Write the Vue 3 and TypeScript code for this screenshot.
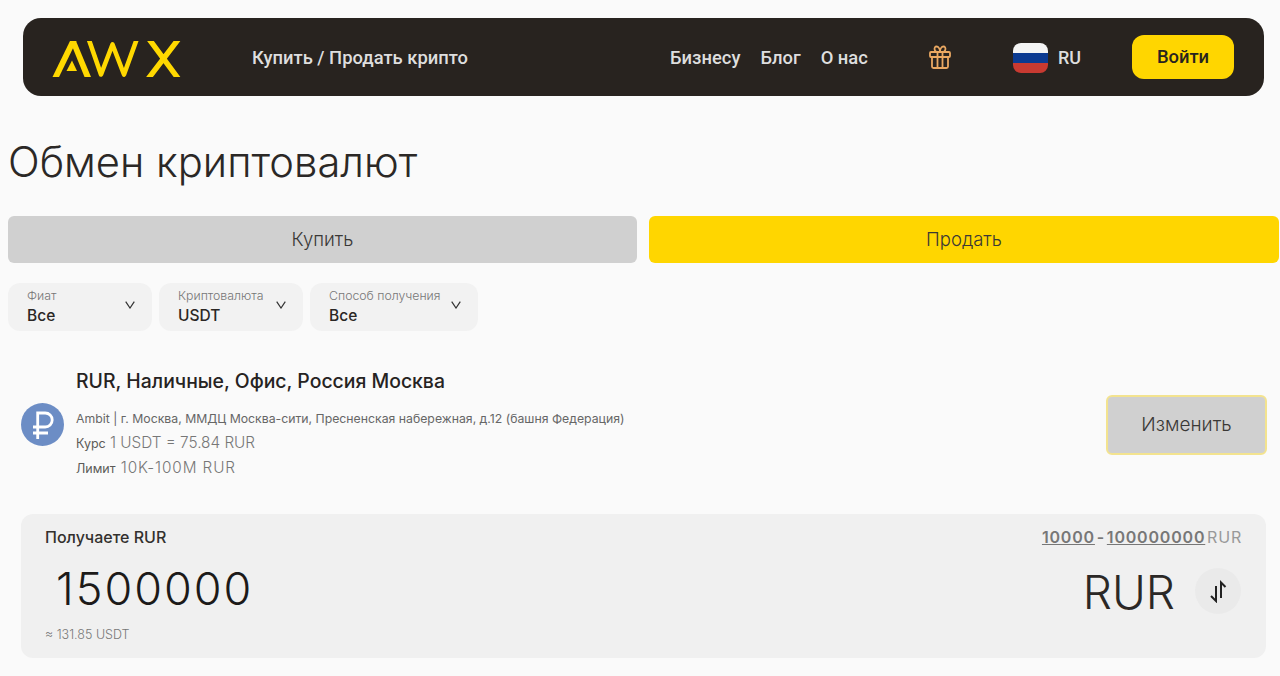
<template>
  <div class="page">
    <header class="topbar">
      <svg class="logo" viewBox="52 40.500 130 36" width="130" height="36" fill="#ffd800">
        <path d="M52.500 76.500 70 40.500h6.500L59 76.500Z" />
        <path d="M70 40.500h6L91 76.500h-6.500Z" />
        <path d="M66.500 70.500 72 60l5 10.500Z" />
        <path d="M88.500 38 101 74 112.500 44 124 74 137 38" fill="none" stroke="#ffd800" stroke-width="4.600" stroke-linejoin="round" />
        <path d="M149 38.500 178.500 78.500M178.500 38.500 148 78.500" fill="none" stroke="#ffd800" stroke-width="5.400" />
      </svg>
      <a class="nav-link trade">Купить / Продать крипто</a>
      <nav class="nav">
        <a v-for="link in links" :key="link" class="nav-link">{{ link }}</a>
      </nav>
      <svg class="gift" viewBox="0 0 22 24" width="22" height="24" fill="none" stroke="#eaa862" stroke-width="1.800" stroke-linejoin="round">
        <rect x="1" y="7" width="20" height="5" rx="1" />
        <path d="M3 12v9.500a1.500 1.500 0 0 0 1.500 1.500h13a1.500 1.500 0 0 0 1.500-1.500V12" />
        <path d="M8.500 7v16M13.500 7v16" />
        <path d="M8.500 7C5 7 4.500 1.500 7.500 1.500 9.500 1.500 11 4 11 7c0-3 1.500-5.500 3.500-5.500 3 0 2.500 5.500-1 5.500" />
      </svg>
      <div class="flag"><span class="white"></span><span class="blue"></span><span class="red"></span></div>
      <span class="lang">RU</span>
      <button class="login">Войти</button>
    </header>

    <h1 class="title">Обмен криптовалют</h1>

    <div class="tabs">
      <button class="tab">Купить</button>
      <button class="tab active">Продать</button>
    </div>

    <div class="filters">
      <div v-for="f in filters" :key="f.label" class="filter" :style="{ width: f.width + 'px' }">
        <div>
          <div class="filter-label">{{ f.label }}</div>
          <div class="filter-value">{{ f.value }}</div>
        </div>
        <svg class="chevron" viewBox="0 0 10 8" width="10" height="8" fill="none" stroke="#333" stroke-width="1.200">
          <path d="M.7.7 5 7 9.300.7" />
        </svg>
      </div>
    </div>

    <section class="offer">
      <svg class="rub" viewBox="0 0 43 43" width="43" height="43">
        <circle cx="21.500" cy="21.500" r="21.500" fill="#6c8dc5" />
        <path d="M16.700 36V10h7.500a7 7 0 0 1 0 14H12M12 30h15" fill="none" stroke="#fff" stroke-width="2.800" />
      </svg>
      <div class="offer-info">
        <div class="offer-title">RUR, Наличные, Офис, Россия Москва</div>
        <div class="offer-address">Ambit | г. Москва, ММДЦ Москва-сити, Пресненская набережная, д.12 (башня Федерация)</div>
        <div class="offer-line"><span class="key">Курс</span> 1 USDT = 75.84 RUR</div>
        <div class="offer-line wide"><span class="key">Лимит</span> 10K-100M RUR</div>
      </div>
      <button class="change">Изменить</button>
    </section>

    <section class="card">
      <div class="card-head">
        <span class="receive">Получаете RUR</span>
        <span class="limits"><u>10000</u> - <u>100000000</u> <span class="unit">RUR</span></span>
      </div>
      <div class="card-main">
        <span class="amount">1500000</span>
        <span class="currency">RUR</span>
        <span class="swap">
          <svg viewBox="0 0 18 24" width="18" height="24" fill="none" stroke="#222" stroke-width="2">
            <path d="M7 7v15l-5-5" />
            <path d="M12 19V3.500L16.500 8" />
          </svg>
        </span>
      </div>
      <div class="approx">≈ 131.85 USDT</div>
    </section>
  </div>
</template>

<script setup lang="ts">
interface Filter {
  label: string
  value: string
  width: number
}

const links: string[] = ['Бизнесу', 'Блог', 'О нас']

const filters: Filter[] = [
  { label: 'Фиат', value: 'Все', width: 144 },
  { label: 'Криптовалюта', value: 'USDT', width: 144 },
  { label: 'Способ получения', value: 'Все', width: 168 }
]
</script>

<style>
html,
body {
  background: #fafafa;
}
</style>

<style scoped>
.page {
  height: 676px;
  overflow: hidden;
  box-sizing: border-box;
  padding: 18px 1px 0 8px;
  background: #fafafa;
  color: #262322;
  font-family: Inter, "Noto Sans", sans-serif;
}

.topbar {
  display: flex;
  align-items: center;
  height: 78px;
  margin: 0 15px;
  padding: 0 30px;
  box-sizing: border-box;
  background: #28231f;
  border-radius: 18px;
}

.logo {
  flex: none;
  margin: 3px 0 0 -1px;
}

.nav-link {
  font-family: Roboto, sans-serif;
  font-weight: 500;
  font-size: 18.400px;
  color: #dedede;
}

.trade {
  margin-left: 70px;
}

.nav {
  display: flex;
  gap: 20px;
  margin-left: auto;
}

.gift {
  margin-left: 61px;
}

.flag {
  display: flex;
  flex-direction: column;
  width: 35px;
  height: 30px;
  margin: 1px 0 0 62px;
  border-radius: 8px;
  overflow: hidden;
}

.flag span {
  flex: 1;
}

.white {
  background: #f4f4f4;
}

.blue {
  background: #0b3a91;
}

.red {
  background: #c83a31;
}

.lang {
  margin-left: 10px;
  font-family: Roboto, sans-serif;
  font-weight: 500;
  font-size: 18px;
  color: #dedede;
}

.login {
  width: 102px;
  height: 44px;
  margin-left: 51px;
  padding: 0 0 2px;
  border: 0;
  border-radius: 12px;
  background: #ffd600;
  color: #28231f;
  font-family: Roboto, sans-serif;
  font-weight: 500;
  font-size: 18.400px;
}

.title {
  margin: 39px 0 26px;
  font-weight: 300;
  font-size: 41.700px;
  line-height: 55px;
  color: #2b2826;
}

.tabs {
  display: flex;
  gap: 12px;
}

.tab {
  flex: 1;
  height: 47px;
  padding: 0 0 2px;
  border: 0;
  border-radius: 6px;
  background: #d0d0d0;
  color: #3a3836;
  font-family: inherit;
  font-weight: 300;
  font-size: 18.500px;
}

.tab:first-child {
  flex: 0 0 629px;
}

.tab.active {
  background: #ffd600;
}

.filters {
  display: flex;
  gap: 7px;
  margin-top: 20px;
}

.filter {
  display: flex;
  align-items: center;
  justify-content: space-between;
  height: 48px;
  box-sizing: border-box;
  padding: 0 17px 0 19px;
  background: #f2f2f2;
  border-radius: 12px;
}

.filter-label {
  margin-bottom: 1px;
  font-weight: 300;
  font-size: 12.300px;
  line-height: 16px;
  color: #777;
}

.filter-value {
  font-weight: 500;
  font-size: 15.500px;
  line-height: 22px;
  color: #2a2725;
}

.chevron {
  margin-bottom: 4px;
}

.offer {
  display: flex;
  align-items: center;
  height: 121px;
  margin: 33px 13px 0;
}

.rub {
  flex: none;
}

.offer-info {
  margin: -2px 0 0 12px;
}

.offer-title {
  font-weight: 500;
  font-size: 19.400px;
  line-height: 24px;
  margin-bottom: 16px;
}

.offer-address {
  font-size: 12.270px;
  line-height: 20px;
  color: #666;
}

.offer-line {
  margin-top: 4px;
  font-weight: 300;
  font-size: 15.300px;
  line-height: 20px;
  color: #777;
}

.offer-line.wide {
  letter-spacing: 0.900px;
}

.key {
  font-weight: 400;
  font-size: 12.500px;
  letter-spacing: 0;
  color: #5c5a58;
}

.change {
  width: 161px;
  height: 60px;
  margin: 0 -1px 0 auto;
  border: 2px solid #f3e38f;
  border-radius: 6px;
  background: #d0d0d0;
  color: #3a3836;
  font-family: inherit;
  font-size: 19px;
  font-weight: 300;
}

.card {
  height: 144px;
  margin: 29px 13px 0;
  box-sizing: border-box;
  padding: 13px 24px;
  background: #f0f0f0;
  border-radius: 12px;
}

.card-head {
  display: flex;
  justify-content: space-between;
  line-height: 20px;
}

.receive {
  font-weight: 500;
  font-size: 16px;
  color: #33302e;
}

.limits {
  font-weight: 600;
  font-size: 16px;
  letter-spacing: 0.800px;
  word-spacing: -3px;
  color: #777;
}

.unit {
  font-weight: 400;
  color: #999;
}

.card-main {
  display: flex;
  align-items: center;
  height: 60px;
  margin-top: 14px;
}

.amount {
  margin: 0 0 6px 11px;
  font-weight: 300;
  font-size: 45px;
  letter-spacing: 2px;
  color: #1c1a19;
}

.currency {
  margin: 2px 0 0 auto;
  font-weight: 300;
  font-size: 46px;
  color: #2b2826;
}

.swap {
  display: flex;
  align-items: center;
  justify-content: center;
  width: 46px;
  height: 46px;
  margin: 0 1px 0 20px;
  border-radius: 50%;
  background: #eaeaea;
}

.approx {
  margin-top: 6px;
  font-weight: 300;
  font-size: 12.500px;
  color: #777;
}
</style>
